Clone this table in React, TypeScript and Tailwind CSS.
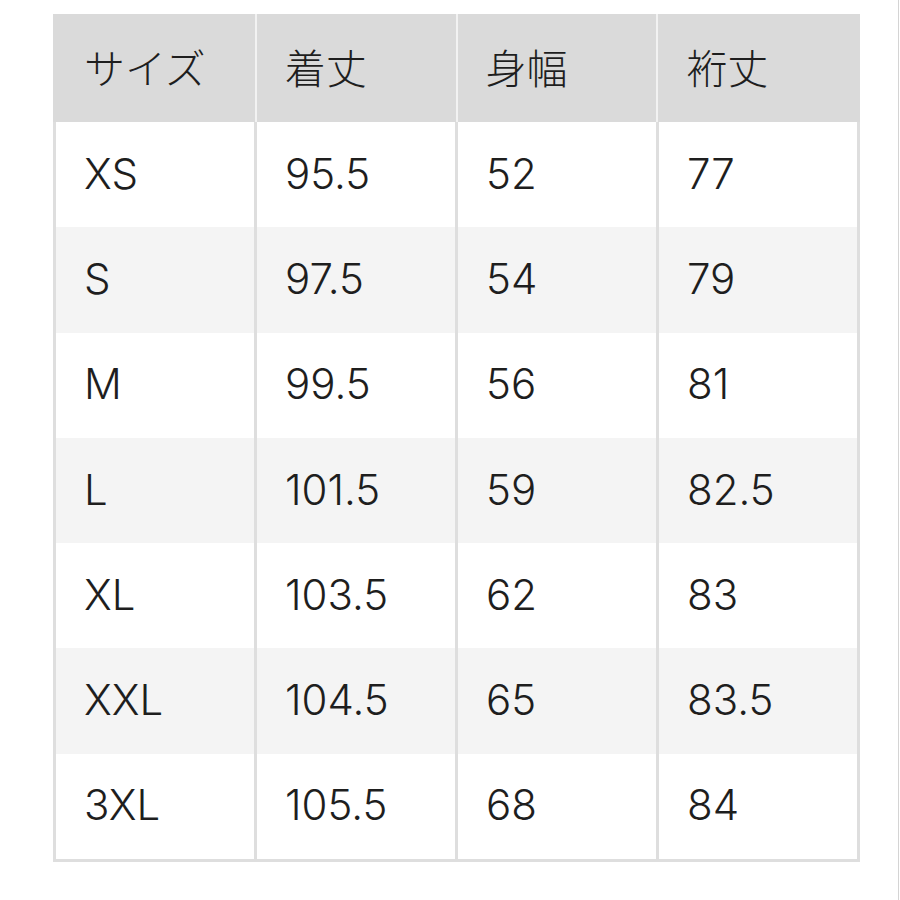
const header = ["サイズ", "着丈", "身幅", "裄丈"];

const rows = [
  ["XS", "95.5", "52", "77"],
  ["S", "97.5", "54", "79"],
  ["M", "99.5", "56", "81"],
  ["L", "101.5", "59", "82.5"],
  ["XL", "103.5", "62", "83"],
  ["XXL", "104.5", "65", "83.5"],
  ["3XL", "105.5", "68", "84"],
];

export default function App() {
  return (
    <div
      className="w-[899px] h-[900px] bg-white border-r border-[#d4d4d4] pt-[14px] pl-[53px]"
      style={{ fontFamily: 'Inter, "Noto Sans CJK JP", sans-serif' }}
    >
      <div className="w-[807px] border-[3px] border-t-0 border-[#dedede] text-[#1e1e1e]">
        {/* header */}
        <div className="flex h-[108px] bg-[#dadada] -mx-[3px] px-[3px]">
          {header.map((h, i) => (
            <div
              key={h}
              className={`flex-1 flex items-center pl-[28px] pb-[2px] text-[41px] font-light ${i > 0 ? "border-l-2 border-[#f2f2f2]" : ""}`}
              style={{ fontFamily: '"Noto Sans CJK JP", sans-serif' }}
            >
              {h}
            </div>
          ))}
        </div>

        {/* body */}
        {rows.map((r, ri) => (
          <div key={r[0]} className={`flex h-[105.3px] ${ri % 2 === 1 ? "bg-[#f4f4f4]" : "bg-white"}`}>
            {r.map((c, i) => (
              <div
                key={i}
                className={`flex-1 flex items-center pl-[28px] pb-[3px] text-[42px] font-light ${i > 0 ? "border-l-[3px] border-[#dedede]" : ""}`}
              >
                {c}
              </div>
            ))}
          </div>
        ))}
      </div>
    </div>
  );
}
